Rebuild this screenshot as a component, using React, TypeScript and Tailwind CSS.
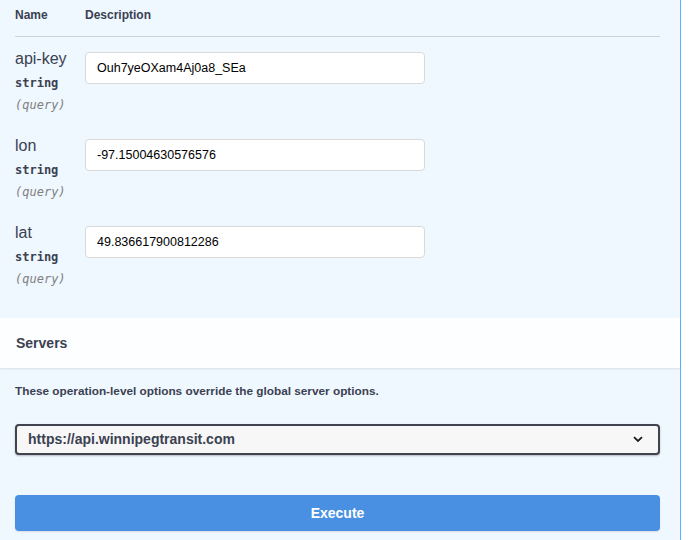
import { useState } from 'react';

interface Param {
  name: string;
  type: string;
  location: string;
  value: string;
}

const params: Param[] = [
  { name: 'api-key', type: 'string', location: 'query', value: 'Ouh7yeOXam4Aj0a8_SEa' },
  { name: 'lon', type: 'string', location: 'query', value: '-97.15004630576576' },
  { name: 'lat', type: 'string', location: 'query', value: '49.836617900812286' },
];

function ParamRow({ param }: { param: Param }) {
  const [value, setValue] = useState(param.value);

  return (
    <div className="flex items-start h-[87px] pt-[13px]">
      <div className="w-[70px] shrink-0 flex flex-col">
        <div className="text-[16px] leading-[18px] text-[#3b4151]">{param.name}</div>
        <div className="mt-[8px] text-[12px] leading-[14px] font-semibold text-[#3b4151] font-['DejaVu_Sans_Mono',monospace]">
          {param.type}
        </div>
        <div className="mt-[8px] text-[12px] leading-[14px] italic text-[#808080] font-['DejaVu_Sans_Mono',monospace]">
          ({param.location})
        </div>
      </div>
      <input
        value={value}
        onChange={(e) => setValue(e.target.value)}
        className="mt-[2px] w-[340px] h-[32px] px-[11px] bg-white border border-[#d9d9d9] rounded-[4px] text-[12.5px] text-black outline-none font-['Liberation_Sans',Arial,sans-serif]"
      />
    </div>
  );
}

export default function App() {
  const [server, setServer] = useState('https://api.winnipegtransit.com');

  return (
    <div className="w-[689px] h-[540px] bg-white overflow-hidden font-['Liberation_Sans',Arial,sans-serif]">
      <div className="w-[681px] h-full bg-[#eff7ff] border-r border-[#61affe] flex flex-col">
        {/* Parameters */}
        <div className="pl-[15px] pr-[20px] pb-[20px]">
          <div className="h-[37px] border-b border-[#cbd3dc] flex pt-[8px] text-[12px] leading-[14px] font-bold text-[#3b4151]">
            <div className="w-[70px]">Name</div>
            <div>Description</div>
          </div>
          {params.map((p) => (
            <ParamRow key={p.name} param={p} />
          ))}
        </div>

        {/* Servers header */}
        <div className="h-[50px] shrink-0 bg-[#fcfeff] shadow-[0_1px_2px_rgba(0,0,0,0.1)] flex items-center px-[16px] relative">
          <h4 className="text-[14px] font-bold text-[#3b4151]">Servers</h4>
        </div>

        {/* Servers body */}
        <div className="pl-[15px] pr-[20px] pt-[16px]">
          <p className="text-[11.8px] leading-[14px] font-bold text-[#3b4151]">
            These operation-level options override the global server options.
          </p>
          <div className="relative mt-[26px]">
            <select
              value={server}
              onChange={(e) => setServer(e.target.value)}
              className="appearance-none w-full h-[31px] pl-[11px] pr-[40px] bg-[#f7f7f7] border-2 border-[#41444e] rounded-[4px] shadow-[0_1px_2px_rgba(0,0,0,0.25)] text-[14px] font-bold text-[#3b4151] outline-none"
            >
              <option value="https://api.winnipegtransit.com">https://api.winnipegtransit.com</option>
            </select>
            <svg
              className="absolute right-[17px] top-[12px] pointer-events-none"
              width="10"
              height="7"
              viewBox="0 0 10 7"
              fill="none"
            >
              <path d="M1 1.2 L5 5 L9 1.2" stroke="#1b1b1b" strokeWidth="1.8" />
            </svg>
          </div>
          <button className="mt-[40px] w-full h-[36px] bg-[#4990e2] rounded-[4px] shadow-[0_1px_2px_rgba(0,0,0,0.1)] text-white text-[14px] font-bold">
            Execute
          </button>
        </div>
      </div>
    </div>
  );
}
